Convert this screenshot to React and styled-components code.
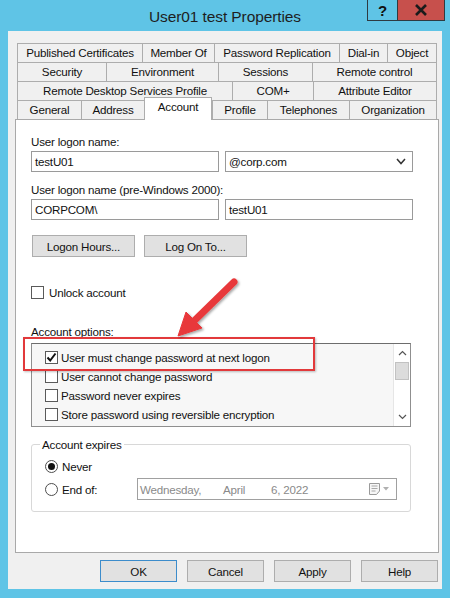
import React from 'react';
import styled, { createGlobalStyle } from 'styled-components';

const GlobalStyle = createGlobalStyle`
  html, body { margin: 0; padding: 0; }
  body {
    font-family: "Liberation Sans", Arial, sans-serif;
    font-size: 11.6px;
    letter-spacing: -0.2px;
    color: #000;
    background: #5fc4e6;
  }
  * { box-sizing: border-box; }
`;

const tabRows = [
  [['Published Certificates', 125], ['Member Of', 72], ['Password Replication', 125], ['Dial-in', 48], ['Object', 50]],
  [['Security', 89], ['Environment', 112], ['Sessions', 94], ['Remote control', 125]],
  [['Remote Desktop Services Profile', 215], ['COM+', 81], ['Attribute Editor', 124]],
  [['General', 64], ['Address', 63], ['Account', 68, true], ['Profile', 55], ['Telephones', 82], ['Organization', 88]],
];

const options = [
  ['User must change password at next logon', true],
  ['User cannot change password', false],
  ['Password never expires', false],
  ['Store password using reversible encryption', false],
];

export default function App() {
  return (
    <Window>
      <GlobalStyle />
      <TitleBar>
        <span />
        <Title>User01 test Properties</Title>
        <Caption>
          <CaptionBtn>?</CaptionBtn>
          <CaptionBtn close>
            <svg width="14" height="12" viewBox="0 0 14 12">
              <path d="M2 1 L12 11 M12 1 L2 11" stroke="#1b1b1b" strokeWidth="2.6" />
            </svg>
          </CaptionBtn>
        </Caption>
      </TitleBar>

      <Client>
        <TabStrip>
          {tabRows.map((row, i) => (
            <TabRow key={i}>
              {row.map(([label, w, active]) => (
                <Tab key={label} $w={w} $active={active}>{label}</Tab>
              ))}
            </TabRow>
          ))}
        </TabStrip>

        <Panel>
          <Label>User logon name:</Label>
          <FieldRow>
            <TextBox>testU01</TextBox>
            <TextBox>
              @corp.com
              <svg width="10" height="7" viewBox="0 0 10 7">
                <path d="M1 1 L5 5.5 L9 1" fill="none" stroke="#333" strokeWidth="1.5" />
              </svg>
            </TextBox>
          </FieldRow>
          <Label $top={10}>User logon name (pre-Windows 2000):</Label>
          <FieldRow>
            <TextBox>CORPCOM\</TextBox>
            <TextBox>testU01</TextBox>
          </FieldRow>

          <ButtonRow>
            <Button $w={103}>Logon Hours...</Button>
            <Button $w={103}>Log On To...</Button>
          </ButtonRow>

          <CheckRow $top={28}>
            <CheckBox />
            <span>Unlock account</span>
          </CheckRow>

          <Label $top={24}>Account options:</Label>
          <ListWrap>
            <ListBox>
              <ListItems>
                {options.map(([text, on]) => (
                  <ListItem key={text}>
                    <CheckBox>
                      {on && (
                        <svg width="11" height="11" viewBox="0 0 11 11">
                          <path d="M1.5 5.5 L4.2 8.5 L9.5 1.5" fill="none" stroke="#111" strokeWidth="2" />
                        </svg>
                      )}
                    </CheckBox>
                    <span>{text}</span>
                  </ListItem>
                ))}
              </ListItems>
              <ScrollBar>
                <ScrollArrow>
                  <svg width="9" height="6" viewBox="0 0 9 6">
                    <path d="M1 5 L4.5 1.5 L8 5" fill="none" stroke="#555" strokeWidth="1.2" />
                  </svg>
                </ScrollArrow>
                <Thumb />
                <Track />
                <ScrollArrow>
                  <svg width="9" height="6" viewBox="0 0 9 6">
                    <path d="M1 1 L4.5 4.5 L8 1" fill="none" stroke="#555" strokeWidth="1.2" />
                  </svg>
                </ScrollArrow>
              </ScrollBar>
            </ListBox>
            <Highlight />
            <Arrow width="80" height="75" viewBox="0 0 80 75">
              <defs>
                <filter id="sh" x="-20%" y="-20%" width="150%" height="150%">
                  <feDropShadow dx="1.5" dy="1.5" stdDeviation="1.2" floodColor="#000" floodOpacity="0.35" />
                </filter>
              </defs>
              <g filter="url(#sh)" fill="#e8393b" stroke="#e8393b">
                <line x1="64" y1="8" x2="25" y2="46" strokeWidth="7" strokeLinecap="round" />
                <polygon points="8,62 32,54 16,38" strokeWidth="1" strokeLinejoin="round" />
              </g>
            </Arrow>
          </ListWrap>

          <Group>
            <Legend>Account expires</Legend>
            <RadioRow $top={3}>
              <Radio $on />
              <span>Never</span>
            </RadioRow>
            <RadioRow $top={1}>
              <Radio />
              <RadioText>End of:</RadioText>
              <DateBox>
                <DatePart $w={83}>Wednesday,</DatePart>
                <DatePart $w={48}>April</DatePart>
                <DatePart>6, 2022</DatePart>
                <DateIcon>
                  <svg width="22" height="14" viewBox="0 0 22 14">
                    <path d="M1.5 1.5 H11.5 V9 L8.5 12.5 H1.5 Z" fill="#f6f6f6" stroke="#9a9a9a" />
                    <path d="M3.5 4 H9.5 M3.5 6.5 H9.5 M3.5 9 H7.5" stroke="#a8a8a8" />
                    <path d="M15 5 L21 5 L18 8.5 Z" fill="#b0b0b0" />
                  </svg>
                </DateIcon>
              </DateBox>
            </RadioRow>
          </Group>
        </Panel>

        <Footer>
          <Button $w={77} $default>OK</Button>
          <Button $w={77}>Cancel</Button>
          <Button $w={77}>Apply</Button>
          <Button $w={77}>Help</Button>
        </Footer>
      </Client>
    </Window>
  );
}

const Window = styled.div`
  width: 450px;
  height: 598px;
  background: #5fc4e6;
  display: flex;
  flex-direction: column;
  overflow: hidden;
`;

const TitleBar = styled.div`
  height: 31px;
  display: grid;
  grid-template-columns: 1fr auto 1fr;
  align-items: start;
`;

const Title = styled.div`
  font-size: 15.5px;
  letter-spacing: -0.1px;
  color: #1e1e1e;
  line-height: 31px;
  padding-top: 1px;
`;

const Caption = styled.div`
  justify-self: end;
  display: flex;
  margin-right: 5px;
  border: 1px solid #2e3b42;
  border-top: none;
`;

const CaptionBtn = styled.div`
  width: ${p => (p.close ? 47 : 29)}px;
  height: 20px;
  display: flex;
  align-items: center;
  justify-content: center;
  background: ${p => (p.close ? '#c7504c' : '#5fc4e6')};
  border-left: ${p => (p.close ? '1px solid #2e3b42' : 'none')};
  font-weight: bold;
  font-size: 15px;
  color: #111;
`;

const Client = styled.div`
  flex: 1;
  margin: 0 8px 9px 8px;
  background: #f0f0f0;
  padding: 12px 3px 7px 7px;
  display: flex;
  flex-direction: column;
`;

const TabStrip = styled.div`
  margin: 0 2px;
  position: relative;
  z-index: 1;
`;

const TabRow = styled.div`
  display: flex;
  height: 19px;
  align-items: flex-start;
`;

const Tab = styled.div`
  width: ${p => p.$w}px;
  height: ${p => (p.$active ? 23 : 19)}px;
  margin-top: ${p => (p.$active ? -3 : 0)}px;
  border-top: 1px solid #adadad;
  border-left: 1px solid #adadad;
  background: ${p => (p.$active ? '#fff' : '#f0f0f0')};
  text-align: center;
  line-height: ${p => (p.$active ? 17 : 18)}px;
  white-space: nowrap;
  color: #111;
  ${p => p.$active && 'border-right: 1px solid #adadad;'}
  &:last-child { border-right: 1px solid #adadad; }
`;

const Panel = styled.div`
  height: 434px;
  background: #fff;
  border: 1px solid #a9a9a9;
  padding: 14px 0 0 15px;
  display: flex;
  flex-direction: column;
  align-items: flex-start;
`;

const Label = styled.div`
  margin-top: ${p => p.$top || 0}px;
  line-height: 15px;
  color: #111;
`;

const FieldRow = styled.div`
  display: flex;
  gap: 6px;
  margin-top: 2px;
`;

const TextBox = styled.div`
  width: 188px;
  height: 21px;
  border: 1px solid #9a9a9a;
  background: #fff;
  padding: 0 6px 0 3px;
  display: flex;
  align-items: center;
  justify-content: space-between;
  color: #111;
`;

const ButtonRow = styled.div`
  display: flex;
  gap: 9px;
  margin-top: 15px;
  padding-left: 1px;
`;

const Button = styled.div`
  width: ${p => p.$w}px;
  height: 22px;
  background: #e1e1e1;
  border: 1px solid ${p => (p.$default ? '#3c8ccb' : '#adadad')};
  display: flex;
  align-items: center;
  justify-content: center;
  color: #111;
`;

const CheckRow = styled.div`
  display: flex;
  align-items: center;
  gap: 5px;
  margin-top: ${p => p.$top || 0}px;
  height: 15px;
  color: #111;
`;

const CheckBox = styled.div`
  width: 13px;
  height: 13px;
  border: 1px solid #5a5a5a;
  background: #fff;
  display: flex;
  align-items: center;
  justify-content: center;
  flex-shrink: 0;
`;

const ListWrap = styled.div`
  position: relative;
  margin-top: 4px;
`;

const ListBox = styled.div`
  width: 380px;
  height: 84px;
  border: 1px solid #8f8f8f;
  border-top-color: #6d6d6d;
  background: #f7f7f7;
  display: flex;
`;

const ListItems = styled.div`
  flex: 1;
  padding: 4px 0 0 13px;
`;

const ListItem = styled.div`
  display: flex;
  align-items: center;
  gap: 3px;
  height: 19px;
  color: #111;
`;

const ScrollBar = styled.div`
  width: 17px;
  background: #fff;
  border-left: 1px solid #e6e6e6;
  display: flex;
  flex-direction: column;
`;

const ScrollArrow = styled.div`
  height: 18px;
  display: flex;
  align-items: center;
  justify-content: center;
`;

const Thumb = styled.div`
  height: 18px;
  margin: 0 1px;
  background: #dcdcdc;
  border: 1px solid #c2c2c2;
`;

const Track = styled.div`
  flex: 1;
`;

const Highlight = styled.div`
  position: absolute;
  left: -8px;
  top: -6px;
  width: 292px;
  height: 34px;
  border: 2px solid #e2393b;
  box-shadow: 1px 1px 2px rgba(0, 0, 0, 0.25);
  pointer-events: none;
`;

const Arrow = styled.svg`
  position: absolute;
  left: 139px;
  top: -69px;
  overflow: visible;
`;

const Group = styled.fieldset`
  margin: 10px 0 0 0;
  width: 380px;
  border: 1px solid #d8d8d8;
  border-radius: 3px;
  padding: 0 0 11px 13px;
`;

const Legend = styled.legend`
  margin-left: -5px;
  padding: 0 2px;
  line-height: 15px;
  color: #111;
`;

const RadioRow = styled.div`
  display: flex;
  align-items: center;
  height: 22px;
  margin-top: ${p => p.$top || 0}px;
  color: #111;
`;

const Radio = styled.div`
  width: 13px;
  height: 13px;
  border-radius: 50%;
  border: 1px solid #4d4d4d;
  background: #fff;
  margin-right: 4px;
  display: flex;
  align-items: center;
  justify-content: center;
  &::after {
    content: '';
    width: 7px;
    height: 7px;
    border-radius: 50%;
    background: ${p => (p.$on ? '#111' : 'transparent')};
  }
`;

const RadioText = styled.span`
  width: 75px;
`;

const DateBox = styled.div`
  width: 260px;
  height: 22px;
  border: 1px solid #a0a0a0;
  display: flex;
  align-items: center;
  padding-left: 2px;
  color: #8a8a8a;
`;

const DatePart = styled.span`
  width: ${p => (p.$w ? `${p.$w}px` : 'auto')};
`;

const DateIcon = styled.div`
  margin-left: auto;
  margin-right: 6px;
  display: flex;
`;

const Footer = styled.div`
  display: flex;
  justify-content: flex-end;
  gap: 10px;
  margin-top: 7px;
  padding-right: 1px;
`;
